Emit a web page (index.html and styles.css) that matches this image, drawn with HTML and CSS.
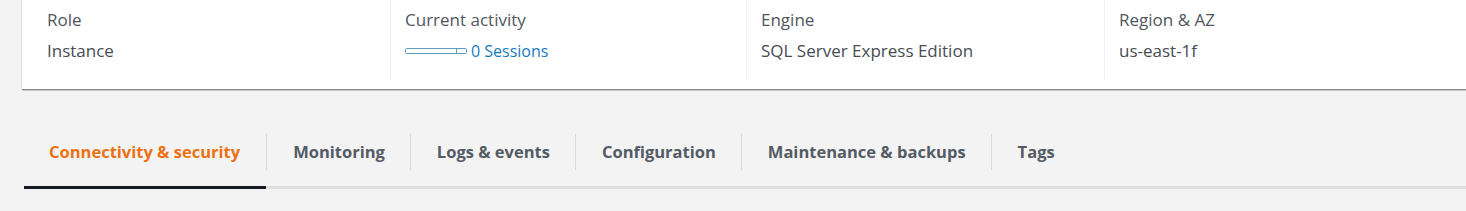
FILE: index.html
```html
<!DOCTYPE html>
<html lang="en">
<head>
<meta charset="utf-8">
<title>Instance summary</title>
<link rel="stylesheet" href="styles.css">
</head>
<body>
<div class="page">
  <section class="card">
    <div class="col first">
      <div class="label">Role</div>
      <div class="value">Instance</div>
    </div>
    <div class="col">
      <div class="label">Current activity</div>
      <div class="value activity">
        <svg class="meter" width="63" height="8" viewBox="0 0 63 8">
          <rect x="0.5" y="1.5" width="61" height="5" rx="1" fill="#fff" stroke="#5a9dbf" stroke-width="1"/>
          <line x1="51.5" y1="1.5" x2="51.5" y2="6.5" stroke="#5a9dbf" stroke-width="1"/>
        </svg>
        <a class="link" href="#">0 Sessions</a>
      </div>
    </div>
    <div class="col">
      <div class="label">Engine</div>
      <div class="value">SQL Server Express Edition</div>
    </div>
    <div class="col">
      <div class="label">Region &amp; AZ</div>
      <div class="value">us-east-1f</div>
    </div>
  </section>

  <nav class="tabs">
    <a class="tab active" href="#">Connectivity &amp; security</a>
    <span class="sep"></span>
    <a class="tab" href="#">Monitoring</a>
    <span class="sep"></span>
    <a class="tab" href="#">Logs &amp; events</a>
    <span class="sep"></span>
    <a class="tab" href="#">Configuration</a>
    <span class="sep"></span>
    <a class="tab" href="#">Maintenance &amp; backups</a>
    <span class="sep"></span>
    <a class="tab" href="#">Tags</a>
  </nav>
</div>
</body>
</html>
```

FILE: styles.css
```css
* { box-sizing: border-box; }

html, body {
  margin: 0;
  padding: 0;
  background: #f3f3f4;
  font-family: "Open Sans", "Noto Sans", Arial, sans-serif;
  color: #545b64;
}

.page {
  width: 1466px;
  height: 211px;
  overflow: hidden;
}

.card {
  margin-left: 22px;
  background: #ffffff;
  display: grid;
  grid-template-columns: 368px 356px 358px 1fr;
  padding: 8px 0 0 0;
  box-shadow: 0 1px 1px rgba(0, 0, 0, 0.35), 0 2px 0 rgba(0, 0, 0, 0.12);
  height: 89px;
}

.col {
  padding: 0 0 0 14px;
  border-left: 1px solid #f0f1f1;
  margin-top: -8px;
  padding-top: 8px;
  height: 80px;
}

.col.first {
  border-left: none;
  padding-left: 25px;
}

.label {
  font-size: 17px;
  line-height: 24px;
  color: #50565e;
}

.value {
  font-size: 17px;
  line-height: 24px;
  margin-top: 7px;
  color: #464c54;
}

.activity {
  display: flex;
  align-items: center;
  gap: 3px;
  padding-left: 0;
}

.meter { display: block; flex: none; }

.link {
  color: #1a7bbf;
  text-decoration: none;
  font-size: 16px;
}

.tabs {
  margin-top: 33px;
  margin-left: 24px;
  display: flex;
  align-items: flex-start;
  border-bottom: 3px solid #dfe1e1;
  height: 67px;
}

.tab {
  display: block;
  padding: 20px 25px 0 26px;
  height: 67px;
  font-size: 16.5px;
  line-height: 20px;
  font-weight: 700;
  color: #545b64;
  text-decoration: none;
}

.tab.active {
  padding-left: 25px;
  padding-right: 26px;
  color: #ec7211;
  border-bottom: 3px solid #16191f;
}

.sep {
  width: 1px;
  height: 36px;
  margin-top: 12px;
  background: #d5dbdb;
  flex: none;
}
```
